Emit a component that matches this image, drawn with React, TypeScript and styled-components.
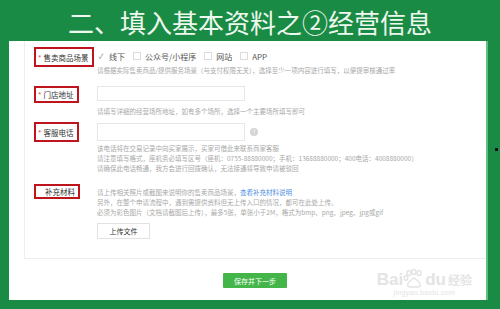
import styled, { createGlobalStyle } from "styled-components";

const GlobalStyle = createGlobalStyle`
  html, body {
    margin: 0;
    padding: 0;
    background: #1a8b45;
  }
  * {
    box-sizing: border-box;
  }
`;

const FONT = `"Noto Sans CJK SC", "Liberation Sans", sans-serif`;

const Page = styled.div`
  position: relative;
  width: 500px;
  height: 309px;
  background: #1a8b45;
  font-family: ${FONT};
  overflow: hidden;
`;

const Title = styled.h1`
  margin: 0;
  height: 41px;
  padding-top: 4px;
  text-align: center;
  color: #eef8ee;
  font-size: 26px;
  font-weight: 400;
  line-height: 36px;
`;

const Panel = styled.div`
  position: relative;
  margin: 0 14px 0 9px;
  height: 259px;
  background: #fff;
  box-shadow: 2px 0 0 #5fbf83;
  display: flex;
  flex-direction: column;
`;

const FormArea = styled.div`
  margin-left: 15px;
  height: 218px;
  border-left: 1px solid #eeeeee;
  border-bottom: 1px solid #eeeeee;
  padding: 6px 0 0 9px;
  display: grid;
  grid-template-columns: 63px 1fr;
  align-content: start;
  align-items: start;
`;

const LabelCell = styled.div<{ $top?: number }>`
  margin-top: ${(p) => p.$top ?? 0}px;
  display: flex;
  align-items: flex-start;
`;

const Label = styled.div<{ $h: number; $pl?: number }>`
  display: flex;
  align-items: center;
  height: ${(p) => p.$h}px;
  padding: 0 3px 0 ${(p) => p.$pl ?? 2}px;
  border: 2.5px solid #c0141c;
  color: #333;
  font-size: 7.5px;
  white-space: nowrap;
`;

const Star = styled.span`
  color: #e64340;
  margin-right: 2px;
`;

const Content = styled.div<{ $top?: number }>`
  margin-top: ${(p) => p.$top ?? 0}px;
  display: flex;
  flex-direction: column;
  align-items: flex-start;
`;

const Options = styled.div`
  display: flex;
  align-items: center;
  height: 18px;
  gap: 8px;
  font-size: 8px;
  color: #555;
`;

const Option = styled.label`
  display: flex;
  align-items: center;
  gap: 4px;
  white-space: nowrap;
`;

const Box = styled.span<{ $checked?: boolean }>`
  width: 8px;
  height: 8px;
  border: ${(p) => (p.$checked ? "none" : "1px solid #dcdcdc")};
  display: inline-flex;
  align-items: center;
  justify-content: center;
  color: #888;
  font-size: 7px;
`;

const Help = styled.div<{ $top?: number }>`
  margin-top: ${(p) => p.$top ?? 0}px;
  font-size: 6.5px;
  line-height: 10px;
  color: #a8a8a8;
  white-space: nowrap;
`;

const Link = styled.span`
  color: #4f8ee0;
`;

const InputRow = styled.div<{ $top?: number }>`
  margin-top: ${(p) => p.$top ?? 0}px;
  display: flex;
  align-items: center;
  gap: 5px;
`;

const Input = styled.div<{ $h: number }>`
  width: 148px;
  height: ${(p) => p.$h}px;
  border: 1px solid #e6e6e6;
  background: #fff;
`;

const Hint = styled.span`
  width: 8px;
  height: 8px;
  border-radius: 50%;
  background: #d4d4d4;
  color: #fff;
  font-size: 6px;
  line-height: 8px;
  text-align: center;
`;

const UploadButton = styled.div`
  margin-top: 6px;
  width: 53px;
  height: 16px;
  border: 1px solid #e2e2e2;
  display: flex;
  align-items: center;
  justify-content: center;
  font-size: 7px;
  color: #333;
`;

const Footer = styled.div`
  margin-left: 15px;
  flex: 1;
  display: flex;
  justify-content: center;
  padding-top: 14px;
`;

const SubmitButton = styled.div`
  width: 64px;
  height: 15px;
  background: #44b549;
  border-radius: 1px;
  color: #fff;
  font-size: 7px;
  display: flex;
  align-items: center;
  justify-content: center;
`;

const Watermark = styled.div`
  position: absolute;
  right: 14px;
  bottom: 4px;
  display: flex;
  flex-direction: column;
  align-items: center;
  color: #e4e4e4;
  font-family: "Liberation Sans", sans-serif;
`;

const MarkTop = styled.div`
  display: flex;
  align-items: flex-end;
  font-size: 17px;
  font-weight: 700;
  line-height: 18px;
`;

const MarkCn = styled.span`
  font-family: ${FONT};
  font-size: 12px;
  margin-left: 2px;
`;

const MarkUrl = styled.div`
  font-size: 7px;
  letter-spacing: 0.3px;
`;

const Dot = styled.span`
  position: absolute;
  left: 495px;
  top: 148px;
  width: 3px;
  height: 3px;
  background: #111;
`;

export default function App() {
  return (
    <Page>
      <GlobalStyle />
      <Title>二、填入基本资料之②经营信息</Title>
      <Panel>
        <FormArea>
          <LabelCell>
            <Label $h={20}>
              <Star>*</Star>售卖商品场景
            </Label>
          </LabelCell>
          <Content>
            <Options>
              <Option>
                <Box $checked>✓</Box>线下
              </Option>
              <Option>
                <Box />公众号/小程序
              </Option>
              <Option>
                <Box />网站
              </Option>
              <Option>
                <Box />APP
              </Option>
            </Options>
            <Help>
              请根据实际售卖商品/提供服务场景（与支付权限无关），选择至少一项内容进行填写，以便提审核通过率
            </Help>
          </Content>

          <LabelCell $top={11}>
            <Label $h={17}>
              <Star>*</Star>门店地址
            </Label>
          </LabelCell>
          <Content $top={11}>
            <Input $h={15} />
            <Help $top={5}>请填写详细的经营场所地址，如有多个场所，选择一个主要场所填写即可</Help>
          </Content>

          <LabelCell $top={6}>
            <Label $h={20}>
              <Star>*</Star>客服电话
            </Label>
          </LabelCell>
          <Content $top={6}>
            <InputRow $top={1}>
              <Input $h={18} />
              <Hint>?</Hint>
            </InputRow>
            <Help $top={2}>该电话将在交易记录中向买家展示，买家可借此来联系商家客服</Help>
            <Help>
              请注意填写格式，座机务必填写区号（座机：0755-88880000；手机：13688880000；400电话：4008880000）
            </Help>
            <Help>请确保此电话畅通，我方会进行回拨确认，无法接通将导致申请被驳回</Help>
          </Content>

          <LabelCell $top={11}>
            <Label $h={15} $pl={9}>
              补充材料
            </Label>
          </LabelCell>
          <Content $top={14}>
            <Help>
              请上传相关照片或截图来说明你的售卖商品场景，<Link>查看补充材料说明</Link>
            </Help>
            <Help>另外，在整个申请流程中，遇到需提供资料但无上传入口的情况，都可在此处上传。</Help>
            <Help>
              必须为彩色图片（文档请截图后上传），最多5张，单张小于2M，格式为bmp、png、jpeg、jpg或gif
            </Help>
            <UploadButton>上传文件</UploadButton>
          </Content>
        </FormArea>
        <Footer>
          <SubmitButton>保存并下一步</SubmitButton>
        </Footer>
        <Watermark>
          <MarkTop>
            Bai
            <svg width="22" height="20" viewBox="0 0 22 20">
              <g fill="none" stroke="currentColor" strokeWidth="1.5">
                <ellipse cx="6" cy="4" rx="2" ry="2.5" />
                <ellipse cx="11" cy="3" rx="2" ry="2.5" />
                <ellipse cx="16" cy="4" rx="2" ry="2.5" />
                <ellipse cx="3" cy="9" rx="1.8" ry="2.2" />
                <path d="M7 18c-3 0-3-4 0-6l4-3 4 3c3 2 3 6 0 6z" />
              </g>
            </svg>
            du<MarkCn>经验</MarkCn>
          </MarkTop>
          <MarkUrl>jingyan.baidu.com</MarkUrl>
        </Watermark>
      </Panel>
      <Dot />
    </Page>
  );
}
